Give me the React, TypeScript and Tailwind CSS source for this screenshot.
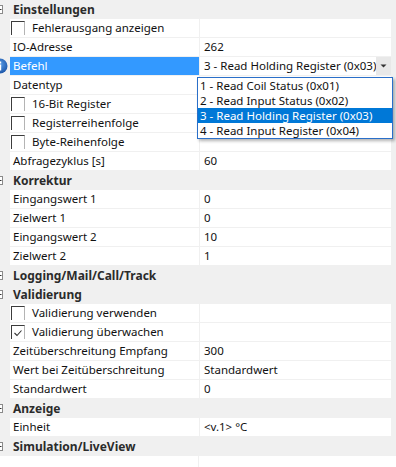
import React from "react";

type Item = {
  label: string;
  value?: string;
  check?: "off" | "on";
  selected?: boolean;
  combo?: boolean;
};
type Row = { cat: string } | Item;

const rows: Row[] = [
  { cat: "Einstellungen" },
  { label: "Fehlerausgang anzeigen", check: "off" },
  { label: "IO-Adresse", value: "262" },
  { label: "Befehl", value: "3 - Read Holding Register (0x03)", selected: true, combo: true },
  { label: "Datentyp" },
  { label: "16-Bit Register", check: "off" },
  { label: "Registerreihenfolge", check: "off" },
  { label: "Byte-Reihenfolge", check: "off" },
  { label: "Abfragezyklus [s]", value: "60" },
  { cat: "Korrektur" },
  { label: "Eingangswert 1", value: "0" },
  { label: "Zielwert 1", value: "0" },
  { label: "Eingangswert 2", value: "10" },
  { label: "Zielwert 2", value: "1" },
  { cat: "Logging/Mail/Call/Track" },
  { cat: "Validierung" },
  { label: "Validierung verwenden", check: "off" },
  { label: "Validierung überwachen", check: "on" },
  { label: "Zeitüberschreitung Empfang", value: "300" },
  { label: "Wert bei Zeitüberschreitung", value: "Standardwert" },
  { label: "Standardwert", value: "0" },
  { cat: "Anzeige" },
  { label: "Einheit", value: "<v.1> °C" },
  { cat: "Simulation/LiveView" },
];

const options = [
  "1 - Read Coil Status (0x01)",
  "2 - Read Input Status (0x02)",
  "3 - Read Holding Register (0x03)",
  "4 - Read Input Register (0x04)",
];

function Checkbox({ on }: { on: boolean }) {
  return (
    <span className="w-[14px] h-[14px] shrink-0 border-t border-l border-r border-t-[#3c3c3c] border-l-[#3c3c3c] border-r-[#b4b4b4] flex items-center justify-center">
      {on && (
        <svg width="10" height="10" viewBox="0 0 10 10">
          <polyline points="1.5,5 4,7.5 8.5,2.5" fill="none" stroke="#333" strokeWidth="1.1" />
        </svg>
      )}
    </span>
  );
}

function InfoIcon() {
  return (
    <svg width="16" height="16" viewBox="0 0 16 16" className="-ml-[8px] shrink-0">
      <defs>
        <radialGradient id="ig" cx="50%" cy="40%" r="60%">
          <stop offset="0%" stopColor="#5a9ee8" />
          <stop offset="100%" stopColor="#1b55a8" />
        </radialGradient>
      </defs>
      <circle cx="8" cy="8" r="7.5" fill="url(#ig)" />
      <rect x="7" y="6.5" width="2.2" height="6" fill="#fff" />
      <rect x="7" y="3.5" width="2.2" height="2" fill="#fff" />
    </svg>
  );
}

function CategoryRow({ label }: { label: string }) {
  return (
    <div className="h-[19px] flex items-center bg-[#f0f0f0]">
      <svg width="8" height="19" viewBox="0 0 8 19" className="shrink-0">
        <rect x="-5.5" y="5.5" width="8" height="8" fill="#fff" stroke="#8a8a8a" />
        <line x1="-3" y1="9.5" x2="1.5" y2="9.5" stroke="#333" />
      </svg>
      <span className="ml-[5px] font-bold text-[12px] text-[#2b2b2b]">{label}</span>
    </div>
  );
}

function ItemRow({ item }: { item: Item }) {
  return (
    <div className="h-[19px] flex bg-[#f0f0f0]">
      <div className="w-[10px] h-[18px] shrink-0 flex items-center overflow-hidden">
        {item.selected && <InfoIcon />}
      </div>
      <div
        className={`w-[189px] h-[18px] shrink-0 mr-[1px] flex items-center whitespace-nowrap ${
          item.selected ? "bg-[#3399ff] text-white" : "bg-white text-[#111]"
        } ${item.check ? "pl-[1px]" : "pl-[3px]"}`}
      >
        {item.check && <Checkbox on={item.check === "on"} />}
        <span className={item.check ? "ml-[7px]" : ""}>{item.label}</span>
      </div>
      <div className="w-[191px] h-[18px] shrink-0 bg-white flex items-center text-[#111]">
        <span className="pl-[4px] flex-1 whitespace-nowrap">{item.value}</span>
        {item.combo && (
          <span className="w-[15px] h-full bg-[#e8e8e8] flex items-center justify-center">
            <svg width="7" height="4" viewBox="0 0 7 4">
              <polygon points="0.5,0.5 6.5,0.5 3.5,3.5" fill="#333" />
            </svg>
          </span>
        )}
      </div>
    </div>
  );
}

export default function App() {
  return (
    <div className="relative w-[396px] h-[467px] overflow-hidden bg-[#f0f0f0] text-[11.5px] leading-[16px] font-['Noto_Sans',sans-serif]">
      {rows.map((r, i) =>
        "cat" in r ? <CategoryRow key={i} label={r.cat} /> : <ItemRow key={i} item={r} />
      )}
      <div className="h-[19px] flex bg-white">
        <div className="w-[199px] border-r border-[#f0f0f0]" />
        <div className="w-[191px]" />
      </div>

      {/* open combo list */}
      <ul className="absolute left-[197px] top-[77px] w-[196px] bg-white border border-[#2a6fc9] shadow-[2px_2px_3px_rgba(0,0,0,0.3)]">
        {options.map((o, i) => (
          <li
            key={o}
            className={`h-[15px] flex items-center pl-[2px] whitespace-nowrap ${
              i === 2 ? "bg-[#0078d7] text-white" : "text-[#111]"
            }`}
          >
            {o}
          </li>
        ))}
      </ul>
    </div>
  );
}
